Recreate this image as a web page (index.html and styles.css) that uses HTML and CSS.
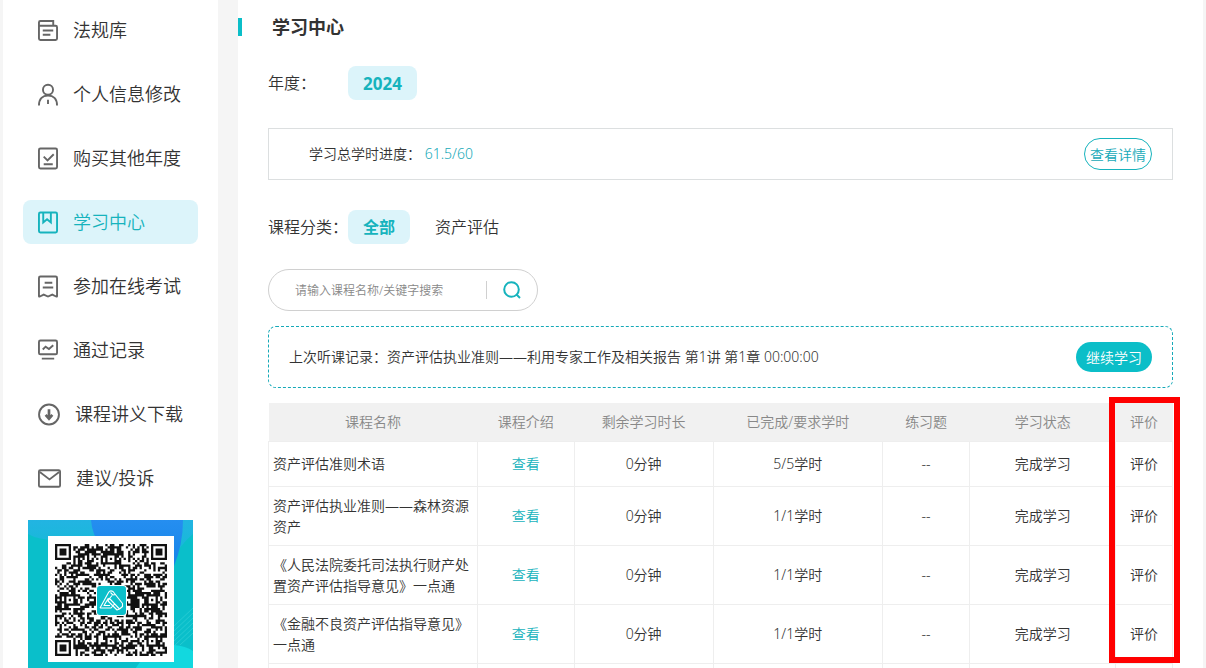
FILE: index.html
```
<!DOCTYPE html>
<html lang="zh-CN">
<head>
<meta charset="utf-8">
<title>学习中心</title>
<link rel="stylesheet" href="styles.css">
</head>
<body>
<div class="page">
  <aside class="sidebar">
    <nav class="menu">
      <a class="menu-item" href="#"><svg class="icon" viewBox="0 0 21 24"><path d="M1 7V3.500q0-1.500 1.500-1.500H16V7M1 7H18.500Q20 7 20 8.500V20.500Q20 22 18.500 22H2.500Q1 22 1 20.500ZM5 12H16M5 16.500H13"/></svg>法规库</a>
      <a class="menu-item" href="#"><svg class="icon" viewBox="0 0 21 24"><circle cx="10.500" cy="7" r="5.300"/><path d="M1 23.500C1 16.500 5 13 10.500 13S20 16.500 20 23.500M10.500 17.500V22"/></svg>个人信息修改</a>
      <a class="menu-item" href="#"><svg class="icon" viewBox="0 0 21 24"><rect x="1" y="1.500" width="19" height="21" rx="1.500"/><path d="M6 10L10 14L16.500 7.500M6 18H15.500"/></svg>购买其他年度</a>
      <a class="menu-item active" href="#"><svg class="icon" viewBox="0 0 21 24"><rect x="1" y="1.500" width="19" height="21" rx="1.500"/><path d="M5.500 2V12L9.500 8.500L13.500 12V2"/></svg>学习中心</a>
      <a class="menu-item" href="#"><svg class="icon" viewBox="0 0 21 24"><path d="M2.500 1.500H18.500Q20 1.500 20 3V22Q20 23 19 22.500L15 20.500L10.500 22.500L6 20.500L2 22.500Q1 23 1 22V3Q1 1.500 2.500 1.500ZM7 8H15M5 13H16"/></svg>参加在线考试</a>
      <a class="menu-item" href="#"><svg class="icon" viewBox="0 0 21 24"><rect x="1" y="1.500" width="19" height="14.500" rx="1.500"/><path d="M5 11L8 8L11.500 10.500L16 6.500M4 20.500H17"/></svg>通过记录</a>
      <a class="menu-item" href="#"><svg class="icon icon-wide" viewBox="0 0 23 24"><circle cx="11.500" cy="12" r="10.400"/><path d="M11.500 6.500V15.500M8 12.500L11.500 16.500L15 12.500" stroke-width="2.800"/></svg>课程讲义下载</a>
      <a class="menu-item" href="#"><svg class="icon icon-mail" viewBox="0 0 25 24"><rect x="1" y="3" width="23" height="18" rx="1.500"/><path d="M2 5L12.500 13L23 5"/></svg>建议/投诉</a>
    </nav>
    <svg class="qr" viewBox="0 0 165 165" role="img" aria-label="二维码">
      <defs>
        <linearGradient id="blue" x1="0" y1="0" x2="0" y2="1"><stop offset="0" stop-color="#258ef0"/><stop offset="1" stop-color="#1685e8"/></linearGradient>
        <linearGradient id="sky" x1="0" y1="0" x2="0" y2="1"><stop offset="0" stop-color="#22b4e2"/><stop offset="1" stop-color="#12bcd2"/></linearGradient>
      </defs>
      <path fill="#0abfca" d="M0 0H165V165H0Z"/>
      <path fill="url(#sky)" d="M0 0H165V14Q150 26 144 44H90L30 20Q10 20 0 14Z"/>
      <path fill="url(#blue)" d="M63 0H155Q155 24 146 46H100Q65 30 63 0Z"/>
      <path stroke="#27cbd3" d="M146 106L165 88M146 111L165 93M146 116L165 98M146 121L165 103M146 126L165 108M152 125L165 113"/>
      <path fill="#12d8df" d="M100 165Q112 128 146 125Q158 126 165 131V165Z"/>
      <path fill="#fff" d="M20 16H146V142H20Z"/>
      <path id="modules" fill="#111" transform="translate(27 24) scale(2.286)" shape-rendering="geometricPrecision"/>
      <rect x="68" y="65" width="31" height="31" rx="4" fill="#fff"/>
      <rect x="69" y="66" width="29" height="29" rx="3" fill="#0bbfca"/>
      <path fill="none" stroke="#fff" stroke-width="1.100" stroke-linejoin="round" d="M72 88L80.500 72.500Q82 70 85 71.500L94.500 83.500V86.500L91.500 89L81.500 78.500L84 75.500M72 88H83L86.500 84M80.500 78L76 85.500H82M81.500 78.500L80 81L89 90L91.500 89M82.500 72.500L85 75L87.500 74.500"/>
    </svg>
  </aside>

  <main class="main">
    <h1 class="title">学习中心</h1>

    <div class="filter">
      <span class="filter-label">年度：</span>
      <button class="pill selected year" type="button">2024</button>
    </div>

    <section class="progress">
      <p>学习总学时进度： <span class="accent">61.5/60</span></p>
      <button class="detail" type="button">查看详情</button>
    </section>

    <div class="filter">
      <span class="filter-label">课程分类：</span>
      <button class="pill selected" type="button">全部</button>
      <button class="pill" type="button">资产评估</button>
    </div>

    <form class="search">
      <input class="search-input" type="text" aria-label="课程搜索" placeholder="请输入课程名称/关键字搜索">
      <span class="divider"></span>
      <button class="search-button" type="button" aria-label="搜索"><svg viewBox="0 0 18 18"><circle cx="8.500" cy="8.500" r="7.300"/><path d="M13.500 13.500L17 17"/></svg></button>
    </form>

    <section class="last">
      <p>上次听课记录：资产评估执业准则——利用专家工作及相关报告 第1讲 第1章 00:00:00</p>
      <button class="resume" type="button">继续学习</button>
    </section>

    <div class="courses">
      <table>
        <colgroup><col class="c-name"><col class="c-intro"><col class="c-left"><col class="c-hours"><col class="c-quiz"><col class="c-state"><col class="c-rate"></colgroup>
        <thead>
          <tr><th>课程名称</th><th>课程介绍</th><th>剩余学习时长</th><th>已完成/要求学时</th><th>练习题</th><th>学习状态</th><th>评价</th></tr>
        </thead>
        <tbody>
          <tr><td>资产评估准则术语</td><td><a href="#">查看</a></td><td>0分钟</td><td>5/5学时</td><td>--</td><td>完成学习</td><td>评价</td></tr>
          <tr><td>资产评估执业准则——森林资源资产</td><td><a href="#">查看</a></td><td>0分钟</td><td>1/1学时</td><td>--</td><td>完成学习</td><td>评价</td></tr>
          <tr><td>《人民法院委托司法执行财产处置资产评估指导意见》一点通</td><td><a href="#">查看</a></td><td>0分钟</td><td>1/1学时</td><td>--</td><td>完成学习</td><td>评价</td></tr>
          <tr><td>《金融不良资产评估指导意见》一点通</td><td><a href="#">查看</a></td><td>0分钟</td><td>1/1学时</td><td>--</td><td>完成学习</td><td>评价</td></tr>
          <tr><td></td><td></td><td></td><td></td><td></td><td></td><td></td></tr>
        </tbody>
      </table>
      <div class="highlight"></div>
    </div>
  </main>
</div>
<script src="qr.js"></script>
</body>
</html>
```

FILE: styles.css
```
* { box-sizing: border-box; }

body {
  margin: 0;
  height: 100vh;
  overflow: hidden;
  background: #f5f5f5;
  color: #333;
  font: 350 14px/21px "Noto Sans", "Noto Sans CJK SC", sans-serif;
}

h1, p { margin: 0; }
a { color: inherit; text-decoration: none; }
button, input { font: inherit; color: inherit; border: 0; background: none; padding: 0; }
button { cursor: pointer; white-space: nowrap; }

.page {
  display: flex;
  gap: 20px;
  min-height: 100%;
  padding: 0 3px;
}

.sidebar {
  flex: 0 0 215px;
  padding: 8px 20px 0;
  background: #fff;
}

.menu { display: flex; flex-direction: column; gap: 20px; }

.menu-item {
  display: flex;
  align-items: center;
  gap: 15px;
  height: 44px;
  padding-left: 15px;
  border-radius: 8px;
  font-size: 18px;
}

.menu-item.active { background: #dcf4fa; color: #16b3bd; }

.icon {
  width: 20px;
  height: 23px;
  fill: none;
  stroke: #666;
  stroke-width: 2;
}

.icon-wide { width: 22px; }
.icon-mail { width: 23px; }
.active .icon { stroke: #16b3bd; }

.qr { display: block; width: 165px; margin: 20px 5px 0; }

.main {
  flex: 1;
  min-width: 0;
  padding-top: 18px;
  background: #fff;
}

.title {
  padding-left: 30px;
  border-left: 4px solid #0bbec8;
  font-size: 18px;
  line-height: 18px;
}

.filter {
  display: flex;
  align-items: center;
  gap: 10px;
  margin: 30px 30px 0;
  font-size: 16px;
}

.filter-label { width: 70px; white-space: nowrap; }

.pill { height: 34px; padding: 0 15px; border-radius: 8px; }
.pill.selected { background: #dcf4fa; color: #16b3bd; font-weight: 700; }
.pill.year { font-size: 17px; }

.progress, .last {
  display: flex;
  align-items: center;
  justify-content: space-between;
  margin: 0 30px;
  padding-right: 20px;
}

.progress p, .last p { padding-bottom: 2px; }

.progress {
  height: 52px;
  margin-top: 28px;
  padding-left: 40px;
  border: 1px solid #dcdfe0;
}

.accent { color: #16a9b8; }

.detail {
  width: 68px;
  height: 32px;
  border: 1px solid #16b3bd;
  border-radius: 16px;
  color: #16a9b8;
}

.search {
  display: flex;
  align-items: center;
  width: 270px;
  height: 42px;
  margin: 25px 30px 0;
  border: 1px solid #d0d0d0;
  border-radius: 21px;
}

.search-input { flex: 1; min-width: 0; padding-left: 26px; font-size: 12px; outline: 0; }
.search-input::placeholder { color: #888; }
.divider { width: 1px; height: 18px; background: #d0d0d0; }
.search-button { display: flex; justify-content: center; width: 50px; }
.search-button svg { width: 18px; height: 18px; fill: none; stroke: #16b3bd; stroke-width: 2; }

.last {
  height: 62px;
  margin-top: 15px;
  padding-left: 20px;
  border: 1px dashed #16a9b8;
  border-radius: 8px;
}

.resume {
  width: 76px;
  height: 30px;
  border-radius: 15px;
  background: #0bbec8;
  color: #fff;
}

.courses { position: relative; margin: 15px 30px 0; }

table { width: 100%; table-layout: fixed; border-collapse: collapse; }
.c-name { width: 23.1%; }
.c-intro { width: 10.7%; }
.c-left { width: 15.4%; }
.c-hours { width: 18.7%; }
.c-quiz { width: 9.7%; }
.c-state { width: 16.1%; }
.c-rate { width: 6.3%; }

th { height: 38px; padding: 0; background: #f1f1f1; color: #888; font-weight: inherit; }
td { height: 45px; padding: 8px 4px; border: 1px solid #eee; text-align: center; }
td:first-child { text-align: left; }
td a { color: #16b3bd; }

.highlight {
  position: absolute;
  top: -6px;
  right: -7px;
  width: 71px;
  height: 266px;
  border: 6px solid #f00;
  pointer-events: none;
}
```

FILE: qr.js
```
// Builds a 49 x 49 module grid: finder, timing and alignment patterns with data between them.
const SIZE = 49;
const ring = (x, y, cx, cy) => Math.max(Math.abs(x - cx), Math.abs(y - cy));
const finders = [[3, 3], [45, 3], [3, 45]];
const aligns = [[24, 6], [6, 24], [42, 24], [24, 42], [42, 42]];
let seed = 20240615;
const bit = () => {
  seed = (seed * 1103515245 + 12345) % 2147483648;
  return seed / 2147483648 < 0.54;
};

function isDark(x, y) {
  const data = bit();
  for (const [cx, cy] of finders) {
    const r = ring(x, y, cx, cy);
    if (r <= 4) return r === 3 || r <= 1;
  }
  for (const [cx, cy] of aligns) {
    const r = ring(x, y, cx, cy);
    if (r <= 2) return r !== 1;
  }
  if (x === 6 || y === 6) return (x + y) % 2 === 0;
  return data;
}

let d = "";
for (let y = 0; y < SIZE; y++) {
  for (let x = 0; x < SIZE; x++) {
    if (isDark(x, y)) d += `M${x} ${y}h1v1h-1z`;
  }
}
document.getElementById("modules").setAttribute("d", d);
```
